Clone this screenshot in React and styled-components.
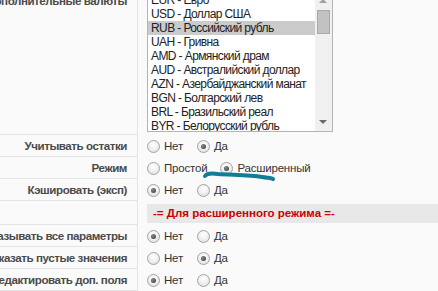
import React from "react"
import styled, { createGlobalStyle } from "styled-components"

const Global = createGlobalStyle`
  html, body {
    margin: 0;
    padding: 0;
    background: #fafafa;
    overflow: hidden;
    font-family: "Liberation Sans", Arial, sans-serif;
  }
`

const Page = styled.div`
  position: relative;
  margin-top: -10px;
  width: 438px;
`

const Row = styled.div`
  display: grid;
  grid-template-columns: 138px 1fr;
  min-height: ${p => p.h || 22}px;
`

const Label = styled.div`
  display: flex;
  justify-content: flex-end;
  align-items: ${p => (p.top ? "flex-start" : "center")};
  padding-top: ${p => (p.top ? "3px" : "0")};
  padding-right: 10px;
  border-right: 1px solid #e4e4e4;
  border-bottom: 1px solid #e4e4e4;
  white-space: nowrap;
  font-size: 11.6px;
  letter-spacing: -0.45px;
  font-weight: bold;
  color: #4b4b4b;
  line-height: 16px;
`

const Value = styled.div`
  display: flex;
  align-items: center;
  padding-left: 9px;
  padding-top: ${p => p.pt || 0}px;
  padding-bottom: ${p => p.pb || 0}px;
  font-size: 11.5px;
  letter-spacing: -0.2px;
  color: #333;
`

const SelectBox = styled.div`
  position: relative;
  width: 186px;
  height: 140px;
  box-sizing: border-box;
  border: 1px solid #b4b4b4;
  background: #fff;
  overflow: hidden;
`

const OptionList = styled.div`
  margin-right: 17px;
`

const Option = styled.div`
  height: 14px;
  line-height: 14px;
  padding-left: 3px;
  font-size: 12px;
  letter-spacing: -0.6px;
  color: #222;
  white-space: nowrap;
  background: ${p => (p.selected ? "#cbcbcb" : "transparent")};
`

const Scrollbar = styled.div`
  position: absolute;
  top: 0;
  right: 0;
  bottom: 0;
  width: 17px;
  background: #f0f0f0;
`

const Arrow = styled.div`
  position: absolute;
  left: 4px;
  ${p => (p.down ? "bottom: 7px;" : "top: 6px;")}
  width: 0;
  height: 0;
  border-left: 4px solid transparent;
  border-right: 4px solid transparent;
  ${p => (p.down ? "border-top: 4px solid #6a6a6a;" : "border-bottom: 4px solid #a0a0a0;")}
`

const Thumb = styled.div`
  position: absolute;
  left: 2px;
  top: 17px;
  width: 11px;
  height: 22px;
  background: #c2c2c2;
  border: 1px solid #a9a9a9;
`

const RadioGroup = styled.div`
  display: flex;
  align-items: center;
`

const RadioItem = styled.label`
  display: flex;
  align-items: center;
  margin-right: ${p => p.gap || 13}px;
`

const Circle = styled.span`
  position: relative;
  width: 13px;
  height: 13px;
  box-sizing: border-box;
  border-radius: 50%;
  border: 1px solid #a3a3a3;
  background: radial-gradient(circle at 50% 35%, #ffffff 0%, #f2f2f2 45%, #d9d9d9 100%);
  margin-right: 4px;
  &::after {
    content: "";
    display: ${p => (p.checked ? "block" : "none")};
    position: absolute;
    left: 3px;
    top: 3px;
    width: 5px;
    height: 5px;
    border-radius: 50%;
    background: radial-gradient(circle at 40% 35%, #8a8a8a 0%, #444 80%);
  }
`

const Header = styled.div`
  flex: 1;
  height: 19px;
  line-height: 19px;
  padding-left: 6px;
  background: #e8e8e8;
  color: #cc0000;
  font-weight: bold;
  font-size: 11.5px;
  letter-spacing: 0;
`

const Scribble = styled.svg`
  position: absolute;
  left: 0;
  top: 10px;
  pointer-events: none;
`

const currencies = [
  "EUR - Евро",
  "USD - Доллар США",
  "RUB - Российский рубль",
  "UAH - Гривна",
  "AMD - Армянский драм",
  "AUD - Австралийский доллар",
  "AZN - Азербайджанский манат",
  "BGN - Болгарский лев",
  "BRL - Бразильский реал",
  "BYR - Белорусский рубль",
]

const Radio = ({ text, checked, gap }) => (
  <RadioItem gap={gap}>
    <Circle checked={checked} />
    {text}
  </RadioItem>
)

const YesNo = ({ yes }) => (
  <RadioGroup>
    <Radio text="Нет" checked={!yes} gap={14} />
    <Radio text="Да" checked={yes} />
  </RadioGroup>
)

export default function App() {
  return (
    <>
      <Global />
      <Page>
        <Row>
          <Label top>Дополнительные валюты</Label>
          <Value pt={2} pb={3}>
            <SelectBox>
              <OptionList>
                {currencies.map(c => (
                  <Option key={c} selected={c.startsWith("RUB")}>{c}</Option>
                ))}
              </OptionList>
              <Scrollbar>
                <Arrow />
                <Thumb />
                <Arrow down />
              </Scrollbar>
            </SelectBox>
          </Value>
        </Row>
        <Row>
          <Label>Учитывать остатки</Label>
          <Value><YesNo yes /></Value>
        </Row>
        <Row>
          <Label>Режим</Label>
          <Value>
            <RadioGroup>
              <Radio text="Простой" gap={13} />
              <Radio text="Расширенный" checked />
            </RadioGroup>
          </Value>
        </Row>
        <Row>
          <Label>Кэшировать (эксп)</Label>
          <Value><YesNo /></Value>
        </Row>
        <Row h={24}>
          <Label />
          <Value><Header>-= Для расширенного режима =-</Header></Value>
        </Row>
        <Row>
          <Label>Показывать все параметры</Label>
          <Value><YesNo /></Value>
        </Row>
        <Row>
          <Label>Показать пустые значения</Label>
          <Value><YesNo yes /></Value>
        </Row>
        <Row>
          <Label>Редактировать доп. поля</Label>
          <Value><YesNo /></Value>
        </Row>
        <Scribble width="438" height="291" viewBox="0 0 438 291">
          <path
            d="M205 176 C 207 173, 212 173, 218 174 C 232 175, 250 175, 262 177 C 268 178, 272 178, 273 179"
            fill="none"
            stroke="#127e95"
            strokeWidth="4"
            strokeLinecap="round"
          />
        </Scribble>
      </Page>
    </>
  )
}
